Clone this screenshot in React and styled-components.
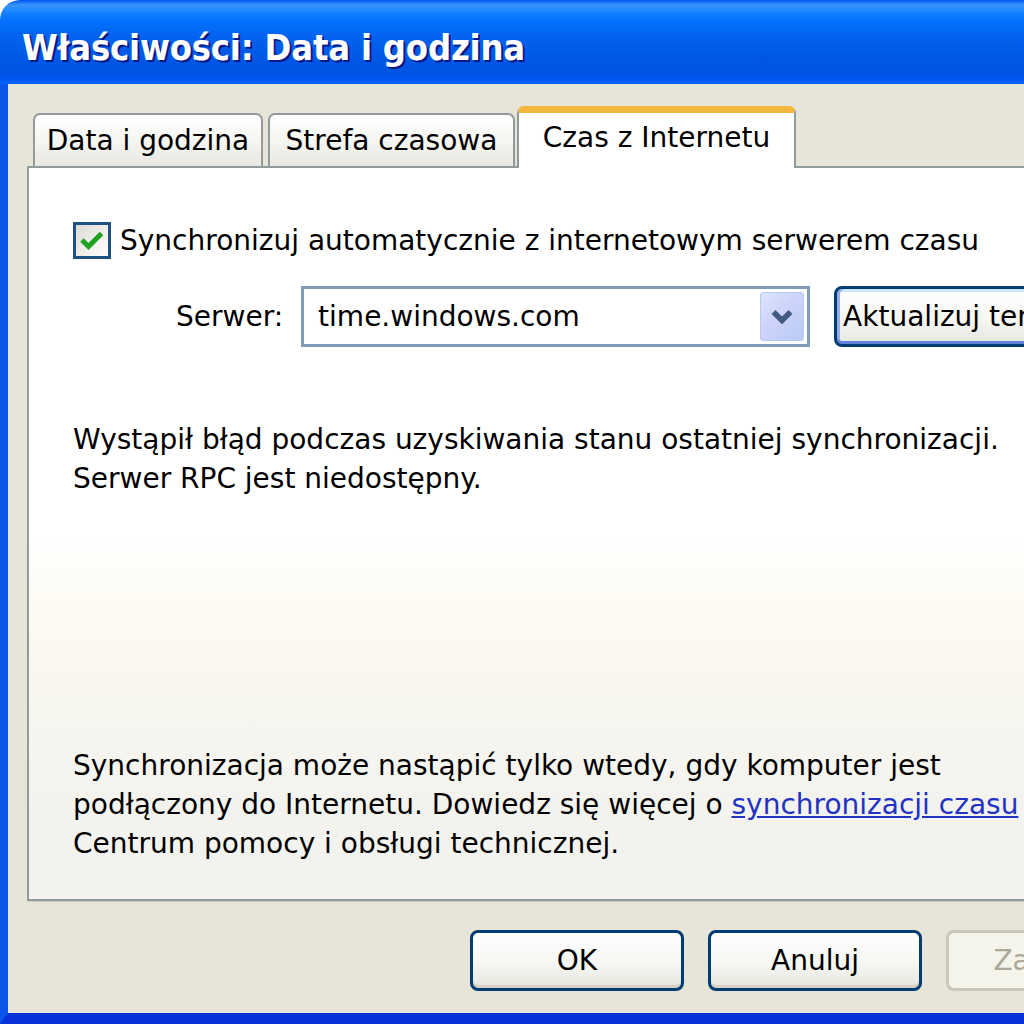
import React from 'react';
import styled, { createGlobalStyle } from 'styled-components';

const GlobalStyle = createGlobalStyle`
  html, body {
    margin: 0;
    padding: 0;
    background: #ffffff;
    overflow: hidden;
  }
  #root {
    width: 1024px;
    height: 1024px;
    overflow: hidden;
  }
`;

const uiFont = `"DejaVu Sans", "Liberation Sans", sans-serif`;

// whole XP window, wider than the viewport so the right side is cut off
const Frame = styled.div`
  width: 1187px;
  height: 1024px;
  display: flex;
  flex-direction: column;
  font-family: ${uiFont};
  font-size: 28px;
  color: #000;
`;

const TitleBar = styled.div`
  height: 84px;
  flex-shrink: 0;
  display: flex;
  align-items: center;
  padding-left: 22px;
  padding-top: 10px;
  box-sizing: border-box;
  border-radius: 20px 20px 0 0;
  background: linear-gradient(
    to bottom,
    #0058ee 0%,
    #3a93ff 6%,
    #288eff 10%,
    #127dff 16%,
    #036ffc 26%,
    #0262ee 45%,
    #0057e5 70%,
    #0054e3 86%,
    #0055eb 93%,
    #005bf5 97%,
    #026afe 100%
  );
`;

const TitleText = styled.span`
  color: #fff;
  font-family: "DejaVu Sans Condensed", "DejaVu Sans", sans-serif;
  font-stretch: condensed;
  font-weight: bold;
  font-size: 36px;
  letter-spacing: -0.2px;
  text-shadow: 2px 2px 0 #0a1883;
`;

const Body = styled.div`
  flex: 1;
  display: flex;
  flex-direction: column;
  background: #e6e5d8;
  border-left: 8px solid #0b55e9;
  border-right: 8px solid #0b55e9;
  border-bottom: 11px solid #0831d9;
  padding: 22px 19px 22px 19px;
  min-height: 0;
`;

const TabStrip = styled.div`
  height: 60px;
  display: flex;
  align-items: flex-end;
  padding-left: 6px;
  position: relative;
  z-index: 1;
`;

const Tab = styled.div`
  box-sizing: border-box;
  width: ${({ $w }) => $w}px;
  margin-right: ${({ $gap }) => $gap || 0}px;
  display: flex;
  align-items: center;
  justify-content: center;
  border: 2px solid #919b9c;
  border-bottom: none;
  border-radius: 7px 7px 0 0;
  white-space: nowrap;
  height: ${({ $active }) => ($active ? 62 : 53)}px;
  margin-bottom: ${({ $active }) => ($active ? -2 : 0)}px;
  padding-bottom: ${({ $active }) => ($active ? 6 : 0)}px;
  background: ${({ $active }) =>
    $active ? '#ffffff' : 'linear-gradient(to bottom, #ffffff 0%, #f4f4f0 55%, #e9e8e1 100%)'};
  border-top: ${({ $active }) => ($active ? '7px solid #f4b73d' : '2px solid #919b9c')};
`;

const Panel = styled.div`
  height: 735px;
  box-sizing: border-box;
  border: 2px solid #919b9c;
  box-shadow: 1px 1px 0 #c9c8bc;
  background: linear-gradient(
    to bottom,
    #ffffff 0%,
    #ffffff 50%,
    #fcfaf1 62%,
    #f6f5ef 76%,
    #f1f1ee 100%
  );
  display: flex;
  flex-direction: column;
  padding: 53px 0 36px 44px;
`;

const CheckRow = styled.div`
  display: flex;
  align-items: center;
  gap: 9px;
  height: 38px;
`;

const CheckBox = styled.div`
  width: 38px;
  height: 37px;
  flex-shrink: 0;
  box-sizing: border-box;
  border: 3px solid #1c5180;
  background: linear-gradient(135deg, #dcdbd5 0%, #f0efea 55%, #ffffff 100%);
  display: flex;
  align-items: center;
  justify-content: center;
`;

const ServerRow = styled.div`
  display: flex;
  align-items: center;
  margin-top: 27px;
  padding-left: 103px;
`;

const Label = styled.span`
  margin-right: 18px;
`;

const Combo = styled.div`
  width: 509px;
  height: 61px;
  flex-shrink: 0;
  box-sizing: border-box;
  border: 3px solid #7f9db9;
  background: #fff;
  display: flex;
  align-items: center;
  justify-content: space-between;
  padding: 0 3px 0 14px;
`;

const DropButton = styled.div`
  width: 44px;
  height: 49px;
  box-sizing: border-box;
  border: 1px solid #b9caf0;
  border-radius: 3px;
  background: linear-gradient(135deg, #dfe4fd 0%, #cdd3f9 45%, #b8cbf6 100%);
  display: flex;
  align-items: center;
  justify-content: center;
`;

const Button = styled.div`
  box-sizing: border-box;
  width: ${({ $w }) => $w || 214}px;
  height: 61px;
  flex-shrink: 0;
  display: flex;
  align-items: center;
  justify-content: center;
  border-radius: 8px;
  border: 3px solid ${({ $disabled }) => ($disabled ? '#c9c7ba' : '#003c74')};
  color: ${({ $disabled }) => ($disabled ? '#aca899' : '#000')};
  background: ${({ $disabled }) =>
    $disabled ? '#f5f4ea' : 'linear-gradient(to bottom, #ffffff 0%, #f5f5f1 60%, #e6e5dd 100%)'};
  box-shadow: ${({ $focus, $disabled }) =>
    $disabled
      ? 'none'
      : $focus
      ? 'inset 0 -3px 0 #6482d9, inset 3px 0 0 #97aee2, inset -3px 0 0 #97aee2, inset 0 3px 0 #cee7ff'
      : 'inset 0 -3px 0 #d6d0c5'};
`;

const AktualizujButton = styled(Button)`
  margin-left: 24px;
  justify-content: flex-start;
  padding-left: 6px;
  white-space: nowrap;
  overflow: hidden;
`;

const Paragraph = styled.p`
  margin: 0;
  line-height: 39px;
  white-space: nowrap;
`;

const ErrorText = styled(Paragraph)`
  margin-top: 73px;
`;

const Spacer = styled.div`
  flex: 1;
`;

const Link = styled.a`
  color: #2233c4;
  text-decoration: underline;
`;

const ButtonRow = styled.div`
  margin-top: 29px;
  display: flex;
  justify-content: flex-end;
  gap: 24px;
`;

const Check = () => (
  <svg width="24" height="22" viewBox="0 0 24 22">
    <path d="M2 11 L8.5 17.5 L21.5 4.5" fill="none" stroke="#21a121" strokeWidth="5" />
  </svg>
);

const Chevron = () => (
  <svg width="22" height="15" viewBox="0 0 22 15">
    <path d="M2.5 3 L11 11.5 L19.5 3" fill="none" stroke="#455a82" strokeWidth="5.5" />
  </svg>
);

export default function App() {
  return (
    <>
      <GlobalStyle />
      <Frame>
        <TitleBar>
          <TitleText>Właściwości: Data i godzina</TitleText>
        </TitleBar>
        <Body>
          <TabStrip>
            <Tab $w={230} $gap={5}>Data i godzina</Tab>
            <Tab $w={247} $gap={2}>Strefa czasowa</Tab>
            <Tab $w={279} $active>Czas z Internetu</Tab>
          </TabStrip>
          <Panel>
            <CheckRow>
              <CheckBox>
                <Check />
              </CheckBox>
              <span>Synchronizuj automatycznie z internetowym serwerem czasu</span>
            </CheckRow>
            <ServerRow>
              <Label>Serwer:</Label>
              <Combo>
                <span>time.windows.com</span>
                <DropButton>
                  <Chevron />
                </DropButton>
              </Combo>
              <AktualizujButton $w={278} $focus>
                Aktualizuj teraz
              </AktualizujButton>
            </ServerRow>
            <ErrorText>
              Wystąpił błąd podczas uzyskiwania stanu ostatniej synchronizacji.
              <br />
              Serwer RPC jest niedostępny.
            </ErrorText>
            <Spacer />
            <Paragraph>
              Synchronizacja może nastąpić tylko wtedy, gdy komputer jest
              <br />
              podłączony do Internetu. Dowiedz się więcej o{' '}
              <Link>synchronizacji czasu</Link> w
              <br />
              Centrum pomocy i obsługi technicznej.
            </Paragraph>
          </Panel>
          <ButtonRow>
            <Button>OK</Button>
            <Button>Anuluj</Button>
            <Button $disabled>Zastosuj</Button>
          </ButtonRow>
        </Body>
      </Frame>
    </>
  );
}
